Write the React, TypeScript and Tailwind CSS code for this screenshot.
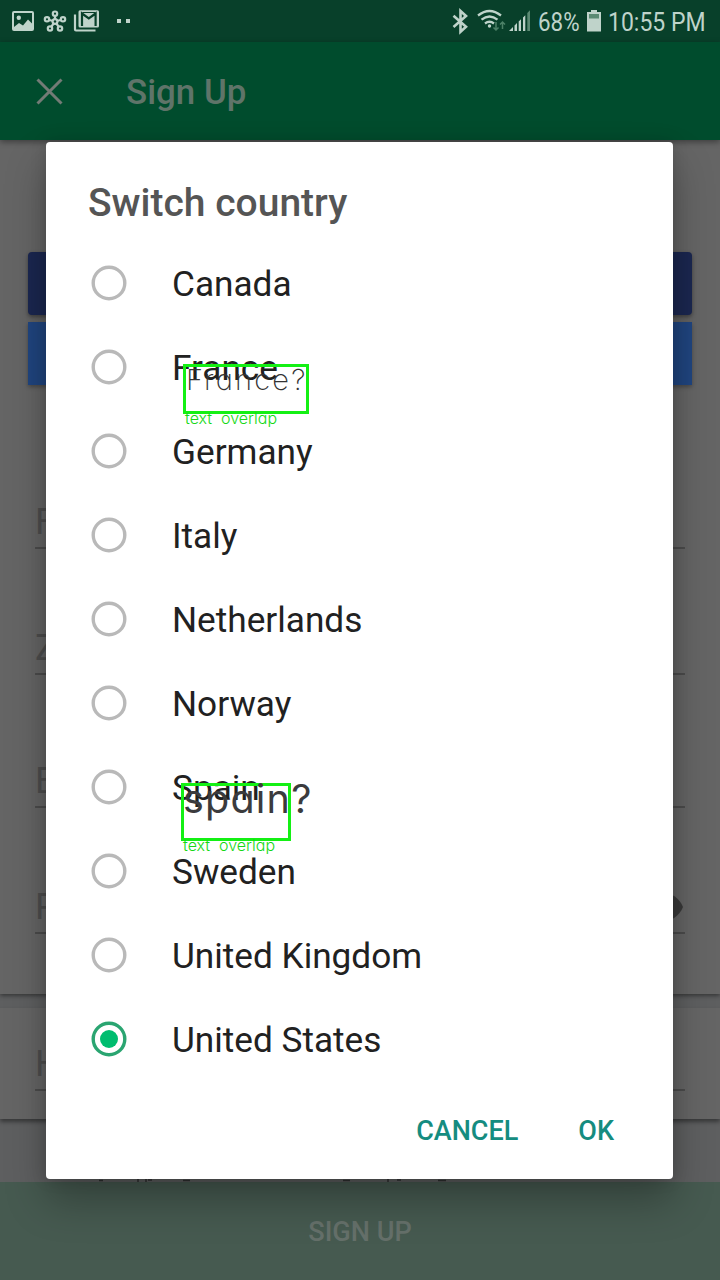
import React from "react";

const countries = [
  "Canada",
  "France",
  "Germany",
  "Italy",
  "Netherlands",
  "Norway",
  "Spain",
  "Sweden",
  "United Kingdom",
  "United States",
];

function StatusBar() {
  return (
    <div className="flex h-[42px] shrink-0 items-center bg-[#08402a] text-[#bfd3ca]">
      <svg className="ml-3 h-[42px] w-[124px] shrink-0" viewBox="12 0 124 42" fill="none">
        <path
          fill="currentColor"
          fillRule="evenodd"
          d="M14 11h18a2 2 0 0 1 2 2v16a2 2 0 0 1-2 2H14a2 2 0 0 1-2-2V13a2 2 0 0 1 2-2Zm0 2v14l5-4 4 2.500 5-6 4 4V13Z"
        />
        <circle cx="18.800" cy="17.800" r="2.200" fill="currentColor" />
        <g stroke="currentColor" strokeWidth="2.200">
          <path d="M55 21.500V16M55 21.500l-5.500-1.500M55 21.500l5.500-1.500M55 21.500l-3.500 5M55 21.500l3.500 5" />
          <circle cx="55" cy="13.700" r="2.200" />
          <circle cx="47" cy="19.300" r="2.200" />
          <circle cx="63" cy="19.300" r="2.200" />
          <circle cx="50" cy="28.500" r="2.200" />
          <circle cx="60" cy="28.500" r="2.200" />
        </g>
        <circle cx="55" cy="21.500" r="3.500" fill="currentColor" />
        <circle cx="55" cy="21.500" r="1.200" fill="#08402a" />
        <path d="M75 14.500V29.500q0 1 1 1h19.500" stroke="currentColor" strokeWidth="2.200" />
        <rect x="78.500" y="10.300" width="20.500" height="17.200" rx="1.500" fill="currentColor" />
        <path d="M82 26V13.500l6.800 5 6.800-5V26" stroke="#08402a" strokeWidth="2.200" />
        <path d="M82.500 12.500h12.500" stroke="#08402a" strokeWidth="1" />
        <path d="M117 19h4v4h-4zM126 19h4v4h-4z" fill="currentColor" />
      </svg>
      <svg className="ml-[316px] h-[42px] w-20 shrink-0" viewBox="452 0 80 42" fill="none">
        <path
          d="M453.500 15.700l12.500 11-5.500 5V11l5.500 5-12.500 11"
          stroke="currentColor"
          strokeWidth="2.600"
        />
        <g stroke="currentColor" strokeWidth="2.300">
          <path d="M478 15.500q11.500-9 23 0" />
          <path d="M481.500 19.700q8-6.500 16 0" />
          <path d="M485 23.500q4.500-3.500 9 0" />
        </g>
        <circle cx="489.500" cy="26" r="1.700" fill="currentColor" />
        <g stroke="#4c8067" strokeWidth="1.500">
          <path d="M496 22v8M493.500 27.500l2.500 2.500 2.500-2.500M502.500 29v-7M500 24.500l2.500-2.500 2.500 2.500" />
        </g>
        <path
          fill="currentColor"
          d="M509 31l4-4v4zM514.500 25.500l2.500-2.500v8h-2.500zM518.700 21.500l2.300-2.300V31h-2.300zM523 17.500l2.300-2.300V31H523z"
        />
        <path fill="#5b8a73" d="M527.300 13l2.700-2.700V31h-2.700z" />
      </svg>
      <span className="ml-[6px] w-[42px] origin-left scale-x-[.86] pt-0.5 text-[26px] whitespace-nowrap">68%</span>
      <svg className="ml-[7px] h-[42px] w-[14px] shrink-0" viewBox="587 0 14 42">
        <path fill="currentColor" d="M591 10h6v2h4v19.500h-14V12h4z" />
        <path fill="#5b8a73" d="M589 14h10v4.500h-10z" />
      </svg>
      <span className="ml-[7px] w-[97px] origin-left scale-x-[.885] pt-0.5 text-[26px] whitespace-nowrap">
        10:55 PM
      </span>
    </div>
  );
}

function Field({ label, className }: { label: string; className: string }) {
  return (
    <div
      className={
        "mx-[35px] h-[49px] shrink-0 border-b-2 border-[#4c4c4c] pt-px text-[36px] leading-[42px] text-[#4e4e4e] " +
        className
      }
    >
      {label}
    </div>
  );
}

function SignUpPage() {
  return (
    <div className="isolate flex h-[1280px] w-[720px] flex-col bg-[#5e5f60]">
      <StatusBar />
      <header className="z-10 flex h-[98px] shrink-0 items-center bg-[#004c2d] text-[#5f7469] shadow-[0_2px_6px_rgba(0,0,0,.4)]">
        <svg className="mt-px ml-9 h-7 w-7" viewBox="0 0 28 28" stroke="#737b76" strokeWidth="3" fill="none">
          <path d="M1.500 1.500l24 24M25.500 1.500l-24 24" />
        </svg>
        <h1 className="ml-[62px] pt-[5px] text-[34.900px] font-medium">Sign Up</h1>
      </header>
      <section className="flex h-[854px] shrink-0 flex-col bg-[#656565] pt-[112px] shadow-[0_2px_4px_rgba(0,0,0,.4)]">
        <div className="mx-7 h-[63px] shrink-0 rounded bg-[#1b2750] shadow-[0_2px_4px_rgba(0,0,0,.4)]" />
        <div className="mx-7 mt-[7px] h-[63px] shrink-0 bg-[#20457f] shadow-[0_2px_4px_rgba(0,0,0,.3)]" />
        <Field label="F" className="mt-[115px]" />
        <Field label="Z" className="mt-[77px]" />
        <Field label="E" className="mt-[84px]" />
        <div className="relative mt-[77px]">
          <Field label="P" className="" />
          <svg className="absolute top-[-2px] left-[637px] h-12 w-12" viewBox="0 0 24 24" fill="#3a3a3a">
            <path d="M12 4.500C7 4.500 2.730 7.610 1 12c1.730 4.390 6 7.500 11 7.500s9.270-3.110 11-7.500c-1.730-4.390-6-7.500-11-7.500z" />
          </svg>
        </div>
      </section>
      <section className="mt-[14px] flex h-[111px] shrink-0 flex-col bg-[#656565] shadow-[0_3px_4px_rgba(0,0,0,.4)]">
        <Field label="H" className="mt-[34px]" />
      </section>
      <div className="flex h-[63px] shrink-0 items-end">
        <svg className="h-[3px] w-[720px]" viewBox="0 0 720 3" stroke="#303232" strokeWidth="1.500" fill="none">
          <path d="M99 1.500h4M138 0v3M146 0v3M148 1h4M183 1.500h7M343 1.500h7M388 0v3M397 1h4M438 1.500h8" />
        </svg>
      </div>
      <div className="flex h-[98px] shrink-0 items-center justify-center bg-[#465a50] pt-[3px] text-[27.100px] font-medium text-[#65706a]">
        SIGN UP
      </div>
    </div>
  );
}

function Radio({ checked }: { checked: boolean }) {
  return (
    <svg className="size-9 shrink-0" viewBox="0 0 36 36" fill="none">
      <circle cx="18" cy="18" r="15.800" stroke={checked ? "#2aa571" : "#b9b9b9"} strokeWidth="3.400" />
      {checked && <circle cx="18" cy="18" r="9" fill="#00bd6f" />}
    </svg>
  );
}

function CountryDialog() {
  return (
    <div
      role="dialog"
      className="absolute top-[142px] left-[46px] flex h-[1037px] w-[627px] flex-col rounded bg-white shadow-[0_22px_40px_rgba(0,0,0,.28),0_0_16px_rgba(0,0,0,.15)]"
    >
      <h2 className="mt-[37px] ml-[42px] h-[62px] text-[39px] leading-[48px] font-medium text-[#555]">
        Switch country
      </h2>
      <div className="flex flex-col">
        {countries.map((name) => (
          <div key={name} className="flex h-[84px] items-center pl-[45px]">
            <Radio checked={name === "United States"} />
            <span className="ml-[45px] pt-px text-[35.200px] leading-[42px] text-[#212121]">{name}</span>
          </div>
        ))}
      </div>
      <div className="mt-[30px] flex items-center justify-end gap-[60px] pr-[59px] text-[27px] leading-[40px] font-medium text-[#158c80]">
        <span>CANCEL</span>
        <span>OK</span>
      </div>
    </div>
  );
}

export default function App() {
  return (
    <div className="relative h-[1280px] w-[720px] overflow-hidden font-['Roboto',sans-serif]">
      <SignUpPage />
      <CountryDialog />
      <div className="absolute top-[364px] left-[183px] h-[50px] w-[126px] border-[3px] border-[#14f014] font-['Inter',sans-serif] [font-feature-settings:'cv11']">
        <span className="absolute top-[-5px] left-0 text-[29px] leading-[36px] font-extralight tracking-[2.200px] whitespace-nowrap text-[#333]">
          France?
        </span>
        <span className="absolute top-[42px] left-[-1px] text-[16px] leading-[18px] font-light whitespace-nowrap text-[#14d814]">
          text&nbsp; overlap
        </span>
      </div>
      <div className="absolute top-[783px] left-[181px] h-[58px] w-[110px] border-[3px] border-[#14f014] font-['Inter',sans-serif] [font-feature-settings:'cv11']">
        <span className="absolute top-[-11px] left-[-1px] text-[39.500px] leading-[48px] font-normal tracking-[1.200px] whitespace-nowrap text-[#3b3b3d]">
          spain?
        </span>
        <span className="absolute top-[50px] left-[-1px] text-[16px] leading-[18px] font-light whitespace-nowrap text-[#14d814]">
          text&nbsp; overlap
        </span>
      </div>
    </div>
  );
}
